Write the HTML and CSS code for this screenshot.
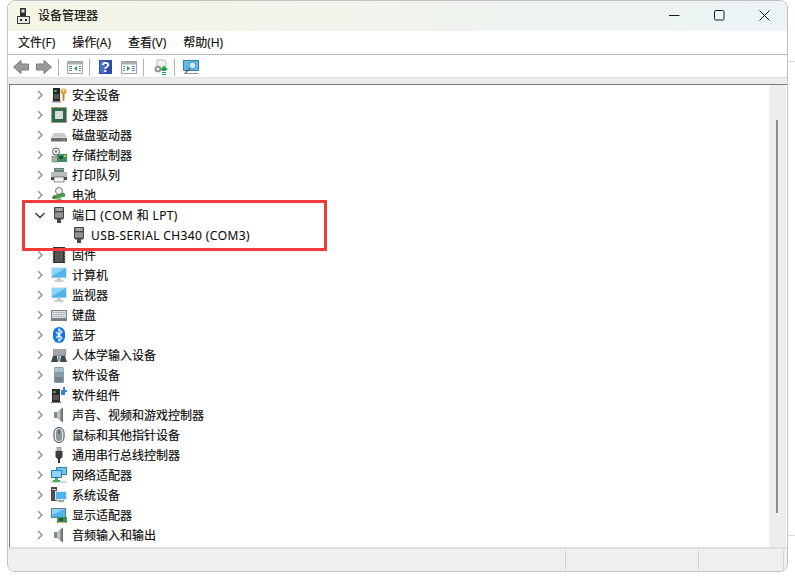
FILE: index.html
```html
<!DOCTYPE html>
<html lang="zh-CN">
<head>
<meta charset="utf-8">
<title>设备管理器</title>
<link rel="stylesheet" href="styles.css">
</head>
<body>
<svg class="sprite" aria-hidden="true">
  <symbol id="chev" viewBox="0 0 10 10"><path d="M3 1l4 4-4 4" fill="none" stroke="#8c8c8c" stroke-width="1.300"/></symbol>
  <symbol id="port" viewBox="0 0 16 16"><path d="M3.500 0h9l.5 1v10l-1 1.500H10V16H6v-3.500H4L3 11V1z" fill="#464646"/><path d="M4.500 1h7v3h-7z" fill="#b4b4b4"/><path d="M5.500 1v3M7.500 1v3M9.500 1v3" stroke="#7c7c7c" stroke-width=".6"/><path d="M4 5h8v6H4z" fill="#7a7a7a"/><path d="M4 7h8M4 9h8" stroke="#a8a8a8"/></symbol>
  <symbol id="mon" viewBox="0 0 16 16"><path d="M0 0h16v11.500H0z" fill="#dbe7ee"/><path d="M1 1h14v9.500H1z" fill="#4fb4ec"/><path d="M1 1h14L1 9z" fill="#8ed4f8"/><path d="M6 11.500h4V13H6z" fill="#b8c0c5"/><path d="M3.500 13.500h9v1h-9z" fill="#8f9aa0"/></symbol>
  <symbol id="spk" viewBox="0 0 16 16"><path d="M3 5h3l6-4.500v15L6 11H3z" fill="#bcc2c4"/><path d="M9.500 2.500L12 .5v15l-2.500-2z" fill="#6f7578"/><path d="M3 5h3v6H3z" fill="#858b8e"/></symbol>
</svg>

<div class="window">
  <header class="titlebar">
    <svg class="app-icon" viewBox="0 0 16 16"><path d="M5 0h6v8H5z" fill="#2f2f2f"/><path d="M6.500 1.500h3v3h-3z" fill="#e4e4e4"/><path d="M2 8h13v8H2z" fill="#3d3d3d"/><path d="M3 9h11v6H3z" fill="#e6e6e6"/><path d="M5 11h2v2H5zM10 11h2v2h-2z" fill="#2c2c2c"/></svg>
    <span class="title">设备管理器</span>
    <div class="caption">
      <svg class="cap" viewBox="0 0 11 11"><path d="M0 5.500h10.500" stroke="#1a1a1a" fill="none"/></svg>
      <svg class="cap" viewBox="0 0 11 11"><rect x=".5" y=".5" width="9.500" height="9.500" rx="1.300" stroke="#1a1a1a" fill="none"/></svg>
      <svg class="cap" viewBox="0 0 11 11"><path d="M.5 .5l10 10M10.500 .5l-10 10" stroke="#1a1a1a" fill="none"/></svg>
    </div>
  </header>

  <nav class="menubar">
    <span>文件(F)</span><span>操作(A)</span><span>查看(V)</span><span>帮助(H)</span>
  </nav>

  <div class="toolbar">
    <svg class="tb tb-back" viewBox="0 0 16 16"><path d="M0.500 8L8 1.500V5h7.500v6H8v3.500z" fill="#9a9a9a" stroke="#7a7a7a"/></svg>
    <svg class="tb" viewBox="0 0 16 16"><path d="M15.500 8L8 1.500V5H.5v6H8v3.500z" fill="#9a9a9a" stroke="#7a7a7a"/></svg>
    <i class="sep"></i>
    <svg class="tb" viewBox="0 0 16 16"><path d="M.5 2.500h15v12H.5z" fill="#fff" stroke="#9aa3a8"/><path d="M1 3h14v2.500H1z" fill="#a8b0b5"/><path d="M2 7h3v1H2zM2 9h3v1H2zM2 11h3v1H2zM12 7h2v1h-2zM12 9h2v1h-2zM12 11h2v1h-2z" fill="#5b87b8"/><path d="M10 7v5L7 9.500z" fill="#2e9e4a"/></svg>
    <i class="sep"></i>
    <svg class="tb tb-help" viewBox="0 0 14 16"><path d="M0 1h13v14H0z" fill="#2a4fa8"/><path d="M1 2h5v12H1z" fill="#4a70c8"/><text x="6.500" y="13" class="q">?</text></svg>
    <svg class="tb" viewBox="0 0 16 16"><path d="M.5 2.500h15v12H.5z" fill="#fff" stroke="#9aa3a8"/><path d="M1 3h14v2.500H1z" fill="#a8b0b5"/><path d="M2 7h2v1H2zM2 9h2v1H2zM2 11h2v1H2zM11 7h3v1h-3zM11 9h3v1h-3zM11 11h3v1h-3z" fill="#5b87b8"/><path d="M6 7v5l3-2.500z" fill="#2e9e4a"/></svg>
    <i class="sep"></i>
    <svg class="tb" viewBox="0 0 16 16"><path d="M5 1h7l2 2v7H5z" fill="#f2f2f2" stroke="#bbb"/><circle cx="6" cy="10" r="3.500" fill="#9b9b9b"/><circle cx="6" cy="10" r="1.300" fill="#eee"/><path d="M8 11l4-4.500 4 4.500h-2v1h-4v-1zM10 13h4v1h-4zM10 15h4v1h-4z" fill="#1fa845"/></svg>
    <i class="sep"></i>
    <svg class="tb" viewBox="0 0 16 16"><path d="M.5 1.500h15v10H.5z" fill="#58bdf0" stroke="#2f7fa8"/><path d="M1 14h14v1H1z" fill="#8a9ba5"/><circle cx="9.500" cy="6.500" r="3.500" fill="#cdeafa" stroke="#6d8794"/><path d="M7 9l-4.500 5" stroke="#667" stroke-width="1.500"/></svg>
  </div>

  <div class="band"></div>

  <div class="content">
    <div class="tree">
      <div class="row"><svg class="chev"><use href="#chev"/></svg><svg class="ico" viewBox="0 0 16 16"><path d="M2 1h7v13H2z" fill="#262626"/><path d="M3.500 3h2v2h-2z" fill="#34d15a"/><path d="M3 7h5v5H3z" fill="#555"/><path d="M1 14h9v1.500H1z" fill="#8a8a8a"/><circle cx="12.500" cy="4.500" r="3" fill="#d9a441"/><circle cx="12.500" cy="3.500" r="1" fill="#fff"/><path d="M11.500 7h2v6l-1 1.500-1-1.500z" fill="#c08a2d"/></svg><span>安全设备</span></div>
      <div class="row"><svg class="chev"><use href="#chev"/></svg><svg class="ico" viewBox="0 0 16 16"><path d="M.5 .5h15v15H.5z" fill="#2f6b4a" stroke="#a58a55" stroke-dasharray="1 1"/><path d="M1.500 1.500h13v13h-13z" fill="#2c6a48"/><path d="M4 4h8v8H4z" fill="#d8dcda"/></svg><span>处理器</span></div>
      <div class="row"><svg class="chev"><use href="#chev"/></svg><svg class="ico" viewBox="0 0 16 16"><path d="M3 6h10l3 4v4H0v-4z" fill="#c9c9c9"/><path d="M0 10h16v4.500H0z" fill="#6d6d6d"/><path d="M0 10h16v1H0z" fill="#e4e4e4"/><path d="M12 12h2v1h-2z" fill="#55d46a"/></svg><span>磁盘驱动器</span></div>
      <div class="row"><svg class="chev"><use href="#chev"/></svg><svg class="ico" viewBox="0 0 16 16"><circle cx="5" cy="4.500" r="3.500" fill="#fff" stroke="#555"/><circle cx="5" cy="4.500" r="1.300" fill="#777"/><path d="M1 9h6v6H1z" fill="#aaa" stroke="#666" stroke-width=".5"/><path d="M6 7h10v8H6z" fill="#3f8f5f"/><path d="M8 9h4v3H8z" fill="#1f5a38"/><path d="M13 8h2v2h-2z" fill="#d9c25a"/></svg><span>存储控制器</span></div>
      <div class="row"><svg class="chev"><use href="#chev"/></svg><svg class="ico" viewBox="0 0 16 16"><path d="M3 1h10v4H3z" fill="#777"/><path d="M4 2h8v1H4z" fill="#3fc7a0"/><path d="M0 5h16v7H0z" fill="#b9bdc0"/><path d="M0 10h16v3H0z" fill="#4a4a4a"/><path d="M3 10h10v5H3z" fill="#f2f2f2" stroke="#444" stroke-width=".6"/></svg><span>打印队列</span></div>
      <div class="row"><svg class="chev"><use href="#chev"/></svg><svg class="ico" viewBox="0 0 16 16"><circle cx="8" cy="4" r="3.500" fill="#eee" stroke="#777"/><path d="M2 9l11-3 1 3-11 3z" fill="#4aa04a" stroke="#2c6b2c" stroke-width=".6"/><path d="M1 11l3-1M6 13v3" stroke="#333"/><circle cx="8" cy="13" r="2.500" fill="#79c46a"/></svg><span>电池</span></div>
      <div class="row"><svg class="chev" viewBox="0 0 10 10"><path d="M.5 3l4.500 4.500L9.500 3" fill="none" stroke="#333" stroke-width="1.300"/></svg><svg class="ico"><use href="#port"/></svg><span class="spaced">端口 (COM 和 LPT)</span></div>
      <div class="row row-child"><svg class="ico"><use href="#port"/></svg><span class="spaced child-label">USB-SERIAL CH340 (COM3)</span></div>
      <div class="row"><svg class="chev"><use href="#chev"/></svg><svg class="ico" viewBox="0 0 16 16"><path d="M2 0h12v16H2z" fill="#2f2f2f"/><path d="M4 1h8v14H4z" fill="#565656"/><path d="M1 2h2M1 5h2M1 8h2M1 11h2M1 14h2M13 2h2M13 5h2M13 8h2M13 11h2M13 14h2" stroke="#aaa"/></svg><span>固件</span></div>
      <div class="row"><svg class="chev"><use href="#chev"/></svg><svg class="ico"><use href="#mon"/></svg><span>计算机</span></div>
      <div class="row"><svg class="chev"><use href="#chev"/></svg><svg class="ico"><use href="#mon"/></svg><span>监视器</span></div>
      <div class="row"><svg class="chev"><use href="#chev"/></svg><svg class="ico" viewBox="0 0 16 16"><path d="M0 3h16v11H0z" fill="#7b8084"/><path d="M1 4h14v7H1z" fill="#dfe2e4"/><path d="M2 5.500h12M2 7.500h12M2 9.500h12" stroke="#9aa0a4" stroke-dasharray="1 .6"/></svg><span>键盘</span></div>
      <div class="row"><svg class="chev"><use href="#chev"/></svg><svg class="ico" viewBox="0 0 16 16"><rect x="2" y="0" width="12" height="16" rx="6" fill="#1276e8"/><path d="M5 5l6 6-3 3V2l3 3-6 6" fill="none" stroke="#fff" stroke-width="1.100"/></svg><span>蓝牙</span></div>
      <div class="row"><svg class="chev"><use href="#chev"/></svg><svg class="ico" viewBox="0 0 16 16"><path d="M2 2h13v7H2z" fill="#8a8f92"/><path d="M3 3h11M3 5h11M3 7h11" stroke="#d4d7d9" stroke-dasharray="1 .6"/><path d="M0 15l2-6h4l1 6zM9 15l1-6h4l2 6z" fill="#40464a"/><path d="M7 9h2v5H7z" fill="#7ba0b8"/></svg><span>人体学输入设备</span></div>
      <div class="row"><svg class="chev"><use href="#chev"/></svg><svg class="ico" viewBox="0 0 16 16"><rect x="3" y="0" width="10" height="16" rx="1.500" fill="#8a99a6"/><path d="M3.500 1h9v4h-9z" fill="#b4c1cb"/><path d="M7 3h2v2H7z" fill="#4fd5e8"/><path d="M4 10h8v5H4z" fill="#74828e"/></svg><span>软件设备</span></div>
      <div class="row"><svg class="chev"><use href="#chev"/></svg><svg class="ico" viewBox="0 0 16 16"><path d="M1 2h8v13H1z" fill="#2c2c2c"/><path d="M2.500 4h2v2h-2z" fill="#34d15a"/><path d="M2 8h6v5H2z" fill="#555"/><path d="M0 15h10v1H0z" fill="#777"/><path d="M10 3h2V0h2v3h2v2h-2v3h-4z" fill="#2f86d8"/></svg><span>软件组件</span></div>
      <div class="row"><svg class="chev"><use href="#chev"/></svg><svg class="ico"><use href="#spk"/></svg><span>声音、视频和游戏控制器</span></div>
      <div class="row"><svg class="chev"><use href="#chev"/></svg><svg class="ico" viewBox="0 0 16 16"><rect x="3" y="0.500" width="10" height="15" rx="5" fill="#e8eef2" stroke="#3d4347"/><rect x="5" y="2" width="6" height="12" rx="3" fill="#8b959c"/><path d="M7.500 3h1v4h-1z" fill="#3d4347"/></svg><span>鼠标和其他指针设备</span></div>
      <div class="row"><svg class="chev"><use href="#chev"/></svg><svg class="ico" viewBox="0 0 16 16"><path d="M6 0h4v4H6z" fill="#bbb" stroke="#666" stroke-width=".5"/><path d="M4.500 4h7v6l-2 2H6.500l-2-2z" fill="#3c3c3c"/><path d="M7 12h2v4H7z" fill="#2c2c2c"/></svg><span>通用串行总线控制器</span></div>
      <div class="row"><svg class="chev"><use href="#chev"/></svg><svg class="ico" viewBox="0 0 16 16"><path d="M5 0h11v8H5z" fill="#2f7fb0"/><path d="M6 1h9v6H6z" fill="#6cc5f0"/><path d="M0 3h11v8H0z" fill="#2f7fb0"/><path d="M1 4h9v6H1z" fill="#8ed4f8"/><path d="M0 14h16v2H0z" fill="#d6dadc"/><path d="M4 11h3v3H4zM2 13h7v2H2z" fill="#3fb24f"/></svg><span>网络适配器</span></div>
      <div class="row"><svg class="chev"><use href="#chev"/></svg><svg class="ico" viewBox="0 0 16 16"><path d="M0 0h6v14H0z" fill="#4c4c4c"/><path d="M1 2h4v1H1z" fill="#ccc"/><path d="M4 4h12v9H4z" fill="#dce6ec"/><path d="M5 5h10v7H5z" fill="#4fb4ec"/><path d="M7 13h6v2H7z" fill="#9aa5ab"/></svg><span>系统设备</span></div>
      <div class="row"><svg class="chev"><use href="#chev"/></svg><svg class="ico" viewBox="0 0 16 16"><path d="M0 1h15v10H0z" fill="#5a7f93"/><path d="M1 2h13v8H1z" fill="#4fb4ec"/><path d="M1 2h13L1 8z" fill="#8ed4f8"/><path d="M6 10h10v6H6z" fill="#3f8f5f"/><path d="M8 11h4v3H8z" fill="#1f5a38"/><path d="M7 15h8v1H7z" fill="#d9b24a"/></svg><span>显示适配器</span></div>
      <div class="row"><svg class="chev"><use href="#chev"/></svg><svg class="ico"><use href="#spk"/></svg><span>音频输入和输出</span></div>
    </div>
    <div class="scrollbar"><div class="thumb"></div></div>
  </div>

  <footer class="status">
    <div class="pane pane-main"></div>
    <div class="pane pane-mid"></div>
    <div class="pane pane-end"></div>
  </footer>
</div>

<div class="highlight"></div>
<i class="edge edge-a"></i>
<i class="edge edge-b"></i>
</body>
</html>
```

FILE: styles.css
```css
* { box-sizing: border-box; }
html, body { margin: 0; padding: 0; height: 100%; background: #fff; overflow: hidden; }
body {
  position: relative;
  font-family: "Open Sans", "Noto Sans CJK SC", sans-serif;
  font-size: 12px;
  line-height: 16px;
  color: #0a0a0a;
  -webkit-text-stroke: .15px #0a0a0a;
}
.sprite { display: none; }

.window {
  margin-left: 7px;
  width: 781px;
  height: 572px;
  border: 1px solid #c2c2c2;
  border-radius: 8px;
  overflow: hidden;
  display: flex;
  flex-direction: column;
  background: #fff;
}

.titlebar {
  height: 30px;
  flex: none;
  display: flex;
  align-items: center;
  padding-left: 7px;
  background: linear-gradient(90deg, #f4f5e6 0%, #f1f4ea 35%, #ebf3f5 100%);
}
.app-icon { width: 16px; height: 16px; flex: none; }
.title { margin-left: 7px; }
.caption { margin-left: auto; display: flex; align-items: center; padding-bottom: 2px; }
.cap { width: 11px; height: 11px; margin-right: 34px; }
.cap:last-child { margin-right: 17px; }

.menubar {
  height: 24px;
  flex: none;
  display: flex;
  align-items: center;
  gap: 17px;
  padding: 0 0 0 10px;
  border-bottom: 1px solid #b9b9b9;
  background: #fff;
}

.toolbar {
  height: 22px;
  flex: none;
  display: flex;
  align-items: center;
  padding: 2px 0 0 5px;
  background: #fff;
}
.tb { width: 16px; height: 16px; flex: none; margin-right: 6px; }
.tb-back { margin-right: 7px; }
.tb-help { width: 14px; margin-left: 1px; margin-right: 8px; }
.q { font-family: "Liberation Sans", sans-serif; font-size: 14px; font-weight: 700; fill: #fff; text-anchor: middle; }
.sep { width: 1px; height: 17px; background: #b5b5b5; flex: none; margin-right: 8px; }

.band {
  height: 7px;
  flex: none;
  background: #ececec;
  border-top: 1px solid #e2e2e2;
}

.content {
  flex: none;
  height: 463px;
  display: flex;
  margin-left: 1px;
  border-top: 1px solid #7b7b7b;
  border-left: 1px solid #7b7b7b;
}
.tree { width: 759px; flex: none; background: #fff; }
.row {
  height: 20px;
  display: flex;
  align-items: center;
  padding-left: 25px;
  white-space: nowrap;
}
.row span { padding-top: 2px; }
.chev { width: 10px; height: 10px; flex: none; margin-right: 6px; }
.ico { width: 16px; height: 16px; flex: none; margin-right: 5px; }
.row-child { padding-left: 61px; }
.child-label { margin-left: -1px; }
.spaced { letter-spacing: .4px; }

.scrollbar {
  width: 17px;
  flex: none;
  background: #eeeeee;
  padding: 35px 0 0 7px;
}
.thumb { width: 2px; height: 393px; background: #8b8b8b; }

.status {
  height: 24px;
  flex: none;
  display: flex;
  background: #efefef;
  border-top: 2px solid #dedede;
  padding: 1px 0;
}
.pane { border-right: 1px solid #d4d4d4; }
.pane-main { width: 558px; }
.pane-mid { width: 133px; }
.pane-end { width: 85px; }

.highlight {
  position: absolute;
  left: 22px;
  top: 200px;
  width: 305px;
  height: 51px;
  border: 3px solid #f23a3a;
}
.edge { position: absolute; left: 788px; width: 7px; height: 1px; background: #dcdcdc; }
.edge-a { top: 61px; }
.edge-b { top: 535px; }
```
